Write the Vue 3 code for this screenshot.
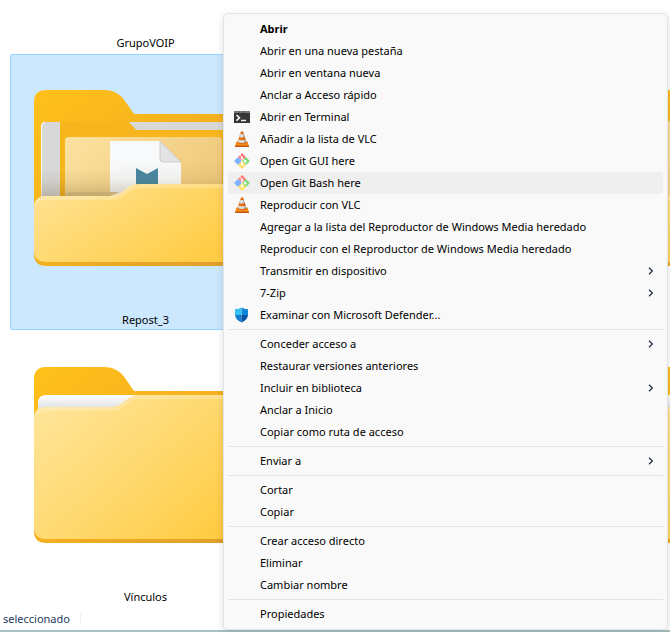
<script setup>
const groups = [
  [
    { text: 'Abrir', bold: true },
    { text: 'Abrir en una nueva pestaña' },
    { text: 'Abrir en ventana nueva' },
    { text: 'Anclar a Acceso rápido' },
    { text: 'Abrir en Terminal', icon: 'terminal' },
    { text: 'Añadir a la lista de VLC', icon: 'vlc' },
    { text: 'Open Git GUI here', icon: 'git' },
    { text: 'Open Git Bash here', icon: 'git', active: true },
    { text: 'Reproducir con VLC', icon: 'vlc' },
    { text: 'Agregar a la lista del Reproductor de Windows Media heredado' },
    { text: 'Reproducir con el Reproductor de Windows Media heredado' },
    { text: 'Transmitir en dispositivo', sub: true },
    { text: '7-Zip', sub: true },
    { text: 'Examinar con Microsoft Defender...', icon: 'shield' },
  ],
  [
    { text: 'Conceder acceso a', sub: true },
    { text: 'Restaurar versiones anteriores' },
    { text: 'Incluir en biblioteca', sub: true },
    { text: 'Anclar a Inicio' },
    { text: 'Copiar como ruta de acceso' },
  ],
  [{ text: 'Enviar a', sub: true }],
  [{ text: 'Cortar' }, { text: 'Copiar' }],
  [{ text: 'Crear acceso directo' }, { text: 'Eliminar' }, { text: 'Cambiar nombre' }],
  [{ text: 'Propiedades' }],
]

const tiles = [
  { id: 'a', kind: 'label', name: 'GrupoVOIP' },
  { id: 'b', kind: 'empty' },
  { id: 'c', kind: 'empty' },
  { id: 'd', kind: 'nested', name: 'Repost_3', selected: true },
  { id: 'e', kind: 'empty' },
  { id: 'f', kind: 'preview' },
  { id: 'g', kind: 'plain', name: 'Vínculos' },
  { id: 'h', kind: 'empty' },
  { id: 'i', kind: 'plain', name: 'n', clipped: true },
]
</script>

<template>
  <div class="explorer">
    <svg class="defs" aria-hidden="true">
      <defs>
        <linearGradient id="back" x1="0" y1="0" x2="1" y2="1">
          <stop offset="0" stop-color="#ffc11a" />
          <stop offset="0.5" stop-color="#f4b01f" />
          <stop offset="1" stop-color="#dc9c30" />
        </linearGradient>
        <linearGradient id="front" gradientUnits="userSpaceOnUse" x1="20" y1="20" x2="170" y2="190">
          <stop offset="0" stop-color="#ffe59b" />
          <stop offset="0.5" stop-color="#ffd970" />
          <stop offset="1" stop-color="#ffca3f" />
        </linearGradient>
        <linearGradient id="flap" gradientUnits="userSpaceOnUse" x1="20" y1="80" x2="100" y2="210">
          <stop offset="0" stop-color="#ffe398" />
          <stop offset="0.5" stop-color="#ffd86e" />
          <stop offset="1" stop-color="#ffcc45" />
        </linearGradient>
        <linearGradient id="paper" x1="0" y1="0" x2="0" y2="1">
          <stop offset="0" stop-color="#ffffff" />
          <stop offset="0.45" stop-color="#dcdfe3" />
          <stop offset="1" stop-color="#dcdfe3" />
        </linearGradient>
        <linearGradient id="tan" x1="0" y1="0" x2="1" y2="0.4">
          <stop offset="0" stop-color="#fce2a0" />
          <stop offset="1" stop-color="#efca7c" />
        </linearGradient>
        <linearGradient id="shade" x1="0" y1="0" x2="0" y2="1">
          <stop offset="0" stop-color="#6b5020" stop-opacity="0" />
          <stop offset="0.5" stop-color="#6b5020" stop-opacity="0.06" />
          <stop offset="1" stop-color="#6b5020" stop-opacity="0.26" />
        </linearGradient>
      </defs>
    </svg>

    <main class="grid">
      <div v-for="t in tiles" :key="t.id" class="tile" :class="[t.kind, { selected: t.selected }]">
        <svg v-if="t.kind !== 'label' && t.kind !== 'empty'" class="folder" viewBox="0 0 224 176" aria-hidden="true">
          <path d="M12 0H70C80 0 86 4 91 11L100 24H212Q224 24 224 36V164Q224 176 212 176H12Q0 176 0 164V12Q0 0 12 0Z" fill="url(#back)" />
          <template v-if="t.kind === 'plain'">
            <path d="M4 60V36Q4 28 12 28H212Q220 28 220 36V60Z" fill="url(#paper)" />
            <path d="M0 52Q0 40 12 40H76C90 40 92 28 105 28H212Q224 28 224 40V160Q224 172 212 172H12Q0 172 0 160Z" fill="url(#front)" />
            <path d="M0 52Q0 40 12 40H76C90 40 92 28 105 28H212Q224 28 224 40V44Q224 32 212 32H105C94 32 92 44 76 44H12Q0 44 0 56Z" fill="#fff" opacity="0.22" />
          </template>
          <template v-else>
            <template v-if="t.kind === 'nested'">
              <path d="M7 120V36Q7 32 11 32H214Q218 32 218 36V120Z" fill="#d8d8d8" />
              <path d="M7.500 120V36Q8 33 11 32" fill="none" stroke="#fff" />
              <path d="M26 32H95L102 40H190V120H26Z" fill="#f7b61e" />
              <path d="M31 120V51Q31 47 35 47H184Q188 47 188 51V120Z" fill="url(#tan)" />
              <path d="M76 51H126L147 72V120H76Z" fill="#f8f9fa" />
              <path d="M126 51L147 72H129Q126 72 126 69Z" fill="#e2e3e5" stroke="#cfcac0" stroke-width="1" />
              <path d="M102 78L113 84L124 78V110H102Z" fill="#4788a3" />
              <path d="M31 104L35 102H85L76 106H31Z" fill="#e3c98b" />
              <path d="M7 106V82H76L96 72H218V94H105C92 94 90 106 76 106Z" fill="url(#shade)" />
            </template>
            <path v-else d="M7 120V31H218V120Z" fill="url(#tan)" />
            <path d="M0 118Q0 106 12 106H76C90 106 92 94 105 94H212Q224 94 224 106V160Q224 172 212 172H12Q0 172 0 160Z" fill="url(#flap)" />
            <path d="M0 118Q0 106 12 106H76C90 106 92 94 105 94H212Q224 94 224 106V110Q224 98 212 98H105C94 98 92 110 76 110H12Q0 110 0 122Z" fill="#fff" opacity="0.22" />
          </template>
        </svg>
        <span v-if="t.name" class="name" :class="{ clipped: t.clipped }">{{ t.name }}</span>
      </div>
    </main>

    <footer class="status"><span>seleccionado</span></footer>

    <div class="menu" role="menu">
      <div v-for="(g, gi) in groups" :key="gi" class="group">
        <button
          v-for="item in g"
          :key="item.text"
          type="button"
          role="menuitem"
          class="item"
          :class="{ bold: item.bold, active: item.active }"
        >
          <span class="icon">
            <svg v-if="item.icon === 'terminal'" viewBox="0 0 16 16">
              <rect y="2" width="16" height="12" fill="#363636" />
              <path d="M0 2H16V4H0Z" fill="#777" />
              <path d="M5 2V4M10 2V4" stroke="#555" />
              <path d="M2.500 6L5.500 8.800L2.500 11.600" fill="none" stroke="#fff" stroke-width="1.500" />
              <path d="M7 11.500H12" stroke="#eee" stroke-width="1.500" />
            </svg>
            <svg v-else-if="item.icon === 'vlc'" viewBox="0 0 16 16">
              <path d="M2.300 10.500H13.700L15 15.500H1Z" fill="#f5901c" />
              <path d="M1.200 14.500H14.800L15 16H1Z" fill="#c4560a" />
              <path d="M7 0.500H9L12.800 12Q8 14.800 3.200 12Z" fill="#e8700f" />
              <path d="M6.300 3H9.700L10.700 6Q8 7.200 5.300 6Z" fill="#d5dde2" />
              <path d="M4.500 8.500Q8 10 11.500 8.500L12.300 11Q8 13 3.700 11Z" fill="#d5dde2" />
              <path d="M9 0.500L12.800 12L10.500 13L8.300 0.500Z" fill="#6a3a18" opacity="0.25" />
            </svg>
            <svg v-else-if="item.icon === 'git'" viewBox="0 0 16 16">
              <path d="M8 0L12 4L8 8L4 4Z" fill="#ff7d80" />
              <path d="M4 4L8 8L4 12L0 8Z" fill="#80b3ff" />
              <path d="M12 4L16 8L12 12L8 8Z" fill="#80dc78" />
              <path d="M8 8L12 12L8 16L4 12Z" fill="#ffe066" />
              <path d="M5.500 1.500L8 4V12M8 5L11.500 8.500" fill="none" stroke="#fff" stroke-width="0.900" />
              <circle cx="8" cy="4.800" r="1.100" fill="#fff" />
              <circle cx="8" cy="11.500" r="1.200" fill="#fff" />
              <circle cx="11.300" cy="8.200" r="1.200" fill="#fff" />
            </svg>
            <svg v-else-if="item.icon === 'shield'" viewBox="0 0 16 16">
              <path d="M7.500 0.500Q10 2.300 14 2.300V8H7.500Z" fill="#0f86d8" />
              <path d="M7.500 0.500Q5 2.300 1 2.300V8H7.500Z" fill="#35c1f1" />
              <path d="M1 8H7.500V15.500Q1.300 12.500 1 8Z" fill="#1580d0" />
              <path d="M14 8H7.500V15.500Q13.700 12.500 14 8Z" fill="#0c55a4" />
            </svg>
          </span>
          <span class="text">{{ item.text }}</span>
          <svg v-if="item.sub" class="chevron" viewBox="0 0 6 8" aria-hidden="true">
            <path d="M1 0.700L4.400 4L1 7.300" fill="none" stroke="#1d2c40" stroke-width="1.200" />
          </svg>
        </button>
      </div>
    </div>
  </div>
</template>

<style>
body {
  margin: 0;
  background: #fff;
}
</style>

<style scoped>
.explorer {
  position: relative;
  overflow: hidden;
  font-family: "Noto Sans", "Open Sans", sans-serif;
  font-size: 11px;
  line-height: 16px;
  color: #000;
}
.defs {
  position: absolute;
  width: 0;
  height: 0;
}
.grid {
  display: grid;
  grid-template-columns: repeat(3, 271px);
  grid-template-rows: 53px 276px 276px;
  gap: 1px 11px;
  padding: 0 0 1px 10px;
}
.tile {
  box-sizing: border-box;
  display: flex;
  flex-direction: column;
  justify-content: flex-end;
  align-items: center;
  border: 1px solid transparent;
  border-radius: 2px;
  padding-bottom: 1px;
}
.tile.nested,
.tile.preview,
.tile.plain {
  justify-content: space-between;
  padding-top: 35px;
}
.tile.selected {
  background: #cce8ff;
  border-color: #99d1ff;
}
.folder {
  display: block;
  width: 224px;
  height: 176px;
}
.name.clipped {
  width: 80px;
}
.status {
  display: flex;
  align-items: center;
  height: 22px;
  padding-left: 3px;
  border-bottom: 2px solid #a9c2c2;
  color: #1e395b;
}
.status span {
  padding-right: 10px;
  border-right: 1px solid #f0f0f0;
  line-height: 12px;
}
.menu {
  position: absolute;
  top: 13px;
  left: 223px;
  right: 2px;
  box-sizing: border-box;
  padding: 4px;
  background: #f9f9f9;
  border: 1px solid #e3e3e3;
  border-radius: 5px;
  box-shadow: 0 3px 9px rgba(0, 0, 0, 0.12);
}
.group + .group {
  margin-top: 3px;
  padding-top: 3px;
  border-top: 1px solid #e3e3e3;
}
.item {
  display: flex;
  align-items: center;
  gap: 10px;
  width: 100%;
  height: 22px;
  margin: 0;
  padding: 0 9px 0 6px;
  border: 0;
  border-radius: 3px;
  background: transparent;
  font: inherit;
  color: #000;
  text-align: left;
  white-space: nowrap;
}
.item.active {
  background: #efefef;
}
.item.bold {
  font-weight: 700;
}
.icon {
  flex: none;
  width: 16px;
  height: 16px;
}
.icon svg {
  display: block;
  width: 16px;
  height: 16px;
}
.text {
  flex: 1;
}
.chevron {
  flex: none;
  width: 6px;
  height: 8px;
}
</style>
